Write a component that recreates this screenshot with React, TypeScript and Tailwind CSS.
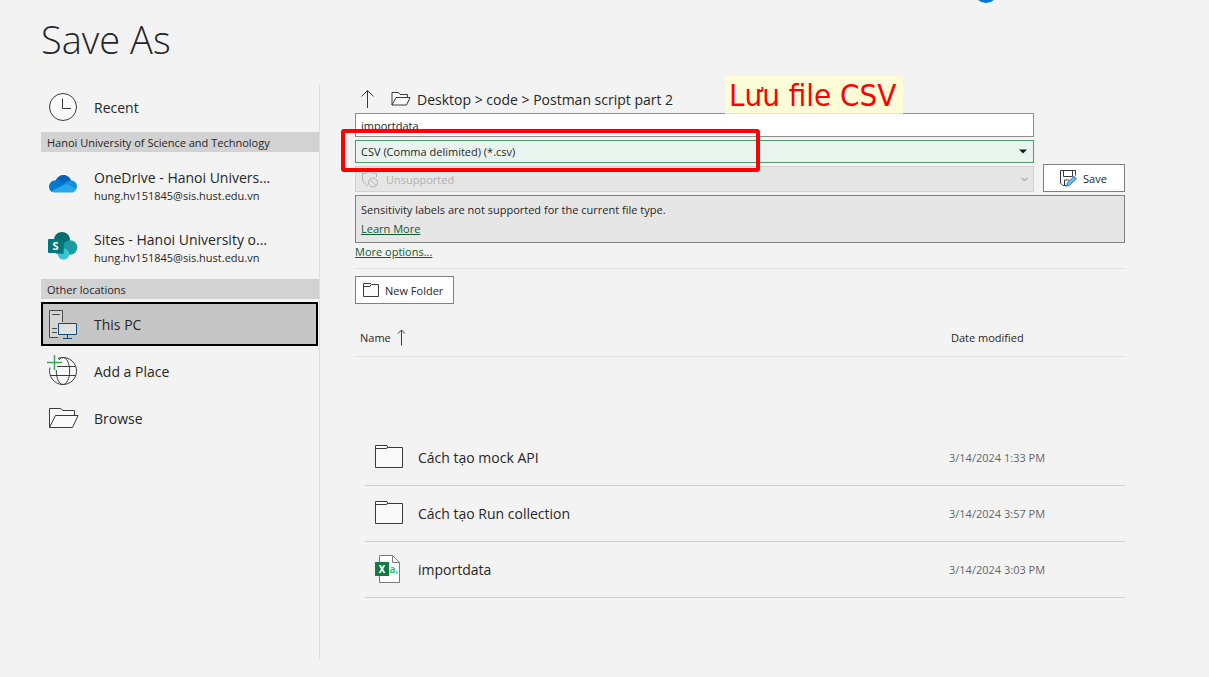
import type { ReactNode } from 'react';

function ClockIcon() {
  return (
    <svg width="32" height="32" viewBox="0 0 32 32" fill="none" stroke="#3a3a3a">
      <circle cx="16" cy="16" r="13.5" fill="#fafafa" />
      <path d="M15.5 7.5V17.5H24" />
    </svg>
  );
}

function OneDriveIcon() {
  return (
    <svg width="32" height="32" viewBox="0 0 32 32">
      <path d="M8.6 12.6C10.2 9 13 7 16.3 7c4 0 7 2.500 8 6L17 18z" fill="#0364b8" />
      <path d="M8.600 12.300c2.200-.3 4 .2 5.700 1.300l6.700 4L5 24c-1.900-1.200-3-3-3-5.200 0-3.500 2.800-6.300 6.600-6.500z" fill="#0078d4" />
      <path d="M24 12.600c3.600 0 6 2.600 6 5.800 0 1.300-.4 2.400-1 3.300L17 15.300l3-1.700c1.200-.7 2.500-1 4-1z" fill="#1490df" />
      <path d="M4.300 23.300L18.300 16l10.900 5.400c-1 1.900-2.800 3.100-5 3.100H8.500c-1.600 0-3.100-.4-4.200-1.200z" fill="#28a8ea" />
    </svg>
  );
}

function SharePointIcon() {
  return (
    <svg width="32" height="32" viewBox="0 0 32 32">
      <circle cx="15" cy="10" r="8" fill="#036c70" />
      <circle cx="23" cy="17.500" r="7.300" fill="#1a9ba1" />
      <circle cx="16.500" cy="24" r="5.800" fill="#37c6d0" />
      <path d="M16 9h1v15h-8l-.5-1H16z" fill="#025558" opacity=".5" />
      <rect x="1" y="9" width="15" height="14" rx="1" fill="#03787c" />
      <text x="8.500" y="20" textAnchor="middle" fontSize="11" fontWeight="700" fill="#fff">
        S
      </text>
    </svg>
  );
}

function ThisPcIcon() {
  return (
    <svg width="32" height="32" viewBox="0 0 32 32" fill="none">
      <path d="M11 29.500H2.500v-27h13V14" fill="#d6d6d6" stroke="#4a4a4a" />
      <path d="M5 6.500h8M5 20.500h5M5 24.500h5" stroke="#4a4a4a" />
      <path d="M11.500 15.500h18v11h-18zM20.500 26.500v4M16 30.500h9" fill="#e0e0e0" stroke="#0f4c81" />
    </svg>
  );
}

function AddPlaceIcon() {
  return (
    <svg width="32" height="32" viewBox="0 0 32 32" fill="none" stroke="#3a3a3a">
      <path d="M12 3.100A13.500 13.500 0 1 1 3.100 12L8 11z" fill="#fafafa" stroke="none" />
      <path d="M11 3.500A13.500 13.500 0 1 1 3 12.500" />
      <path d="M12 5c1-1.600 2.400-2.500 4-2.500 3.700 0 6.700 6 6.700 13.500s-3 13.500-6.700 13.500S9.300 23.500 9.300 16v-1M10 11.500h18.500M3.500 20.500h25" />
      <path d="M7.500 0v15M0 7.500h15" stroke="#3fa75a" strokeWidth="1.5" />
    </svg>
  );
}

function OpenFolderIcon({ className }: { className: string }) {
  return (
    <svg className={className} viewBox="0 0 32 22" fill="none" stroke="#3a3a3a">
      <path d="M2.500 20.500V1.500h11l2.500 2h11.500v5" fill="#fafafa" />
      <path d="M2.500 20.500L8.500 8.500H31l-5.500 12z" fill="#fafafa" strokeLinejoin="round" />
    </svg>
  );
}

function SmallOpenFolderIcon() {
  return (
    <svg width="20" height="14" viewBox="0 0 20 14" fill="none" stroke="#3a3a3a">
      <path d="M1 13V.5h6.500L9 2.500h7.500v3M1 13L5 5.500h14L15.500 13z" fill="#fafafa" strokeLinejoin="round" />
    </svg>
  );
}

function FolderIcon() {
  return (
    <svg width="28" height="28" viewBox="0 0 28 28" fill="none" stroke="#3a3a3a">
      <path d="M.5 24.500v-22H12l1 2h14.500v20z" fill="#fafafa" />
      <path d="M.5 5.500H11l2-1" />
    </svg>
  );
}

function CsvIcon() {
  return (
    <svg width="28" height="28" viewBox="0 0 28 28">
      <path d="M4.500.5h13l7 7v20h-20z" fill="#fff" stroke="#7a7a7a" />
      <path d="M17.500.5v7h7" fill="none" stroke="#7a7a7a" />
      <rect y="7" width="14" height="14" fill="#107c41" />
      <path d="M3.800 10h2.100L7.100 12.500 8.400 10h2l-2.300 4 2.300 4H8.300L7 15.400 5.700 18h-2L6 14z" fill="#fff" />
      <text x="14.500" y="18" fontSize="10" fontWeight="700" fill="#33c481">
        a,
      </text>
    </svg>
  );
}

function Place({ icon, label, detail, selected }: { icon: ReactNode; label: string; detail?: string; selected?: boolean }) {
  const size = detail
    ? 'h-[62px] pt-0.5 pl-1.5'
    : selected
      ? 'my-[3px] mr-px h-11 border-2 border-black bg-[#c6c6c6] pl-1'
      : 'h-[47px] pb-1 pl-1.5';
  return (
    <button type="button" className={`flex items-center gap-[15px] text-left ${size}`}>
      {icon}
      <span className={detail ? 'flex flex-col pt-1' : 'flex flex-col pt-0.5'}>
        <span className="text-sm leading-5">{label}</span>
        {detail && <span className="text-[11px] leading-4">{detail}</span>}
      </span>
    </button>
  );
}

const files = [
  { name: 'Cách tạo mock API', date: '3/14/2024 1:33 PM', icon: <FolderIcon /> },
  { name: 'Cách tạo Run collection', date: '3/14/2024 3:57 PM', icon: <FolderIcon /> },
  { name: 'importdata', date: '3/14/2024 3:03 PM', icon: <CsvIcon /> },
];

export default function App() {
  return (
    <div className="relative flex min-h-screen flex-col overflow-hidden bg-[#f3f3f3] pb-[18px] pl-[41px] font-['Open_Sans',sans-serif] text-[11px] text-[#262626]">
      <div className="absolute -top-[21px] right-[211px] size-6 rounded-full bg-[#0078d7]" />
      <header className="h-[85px] pt-3">
        <h1 className="text-[38px] leading-[54px] font-light">Save As</h1>
      </header>

      <div className="flex flex-1">
        <nav className="flex w-[279px] shrink-0 flex-col border-r border-[#dedede]">
          <Place icon={<ClockIcon />} label="Recent" />
          <h2 className="h-5 bg-[#d2d2d2] pl-1.5 leading-[22px] font-medium">Hanoi University of Science and Technology</h2>
          <Place icon={<OneDriveIcon />} label="OneDrive - Hanoi Univers..." detail="hung.hv151845@sis.hust.edu.vn" />
          <Place icon={<SharePointIcon />} label="Sites - Hanoi University o..." detail="hung.hv151845@sis.hust.edu.vn" />
          <h2 className="mt-[3px] h-5 bg-[#d2d2d2] pl-1.5 leading-[22px] font-medium">Other locations</h2>
          <Place icon={<ThisPcIcon />} label="This PC" selected />
          <Place icon={<AddPlaceIcon />} label="Add a Place" />
          <Place icon={<OpenFolderIcon className="h-[22px] w-8" />} label="Browse" />
        </nav>

        <main className="relative mr-[84px] ml-[35px] flex-1">
          <div className="flex h-7 items-center pl-1.5">
            <button type="button" aria-label="Up one level">
              <svg width="14" height="20" viewBox="0 0 14 20" fill="none" stroke="#3a3a3a">
                <path d="M6.500 19V1.500M.5 7.500l6-6 6 6" />
              </svg>
            </button>
            <div className="ml-4 flex items-center gap-1.5">
              <SmallOpenFolderIcon />
              <span className="pt-0.5 text-sm leading-5">Desktop &gt; code &gt; Postman script part 2</span>
            </div>
          </div>

          <div className="flex items-end gap-[9px]">
            <div className="flex flex-1 flex-col gap-[3px]">
              <input aria-label="File name" defaultValue="importdata" className="h-6 border border-[#8f8f8f] bg-white px-[5px] outline-none" />
              <div className="relative flex">
                <select aria-label="File type" className="h-[23px] flex-1 appearance-none border border-[#4f9a6e] bg-[#eaf4ee] px-[5px] pt-0.5 outline-none">
                  <option>CSV (Comma delimited) (*.csv)</option>
                </select>
                <svg className="pointer-events-none absolute top-[9px] right-[7px]" width="8" height="5" viewBox="0 0 8 5">
                  <path d="M0 .5h8L4 4.500z" fill="#1a1a1a" />
                </svg>
              </div>
              <div className="relative flex">
                <select aria-label="Sensitivity" disabled className="h-[26px] flex-1 appearance-none border border-[#d2d2d2] bg-[#e6e6e6] pt-0.5 pl-[30px] text-[#b1b1b1] opacity-100">
                  <option>Unsupported</option>
                </select>
                <svg className="pointer-events-none absolute top-[5px] left-[7px]" width="17" height="17" viewBox="0 0 17 17" fill="none" stroke="#b1b1b1">
                  <path d="M14.500 6V2.500C12 2.500 10 2 7.500.5 5.500 2 3.500 2.500.5 2.500V7c0 3.500 2 6 5.500 8" />
                  <circle cx="11" cy="11.500" r="4.500" />
                  <path d="M8 8.500l6 6" />
                </svg>
                <svg className="pointer-events-none absolute top-[11px] right-1.5" width="7" height="5" viewBox="0 0 7 5" fill="none" stroke="#b1b1b1" strokeWidth="1.5">
                  <path d="M.5 1l3 2.500 3-2.500" />
                </svg>
              </div>
            </div>
            <button type="button" className="flex h-7 w-[82px] items-center gap-1.5 border border-[#808080] bg-white pl-4">
              <svg width="17" height="17" viewBox="0 0 17 17" fill="none" stroke="#3a3a3a">
                <path d="M6 15.500H3L.5 13V.5h15v5M3.500.5v6h9v-6M4.500 15v-5H9" />
                <path d="M6.500 16l1-3L14 6.500l2 2-6.500 6.500z" fill="#8ec8f0" stroke="#2b90d9" strokeWidth="1.2" />
              </svg>
              <span className="pt-0.5">Save</span>
            </button>
          </div>

          <section className="mt-[3px] h-12 border border-[#808080] bg-[#e6e6e6] px-[5px] pt-1">
            <p className="leading-[19px]">Sensitivity labels are not supported for the current file type.</p>
            <a href="#learn" className="leading-[19px] text-[#0e5c2f] underline">Learn More</a>
          </section>
          <div className="h-[26px] border-b border-[#dedede]">
            <a href="#options" className="leading-[18px] text-[#0e5c2f] underline">More options...</a>
          </div>

          <button type="button" className="mt-[7px] flex h-7 w-[99px] items-center gap-1.5 border border-[#808080] bg-white pl-[7px]">
            <svg width="16" height="14" viewBox="0 0 16 14" fill="none" stroke="#3a3a3a">
              <path d="M.5 13.500V.5h7l1 1h7v12zM.5 3.500H7l1-2" fill="#fafafa" />
            </svg>
            <span className="pt-0.5">New Folder</span>
          </button>

          <table className="mt-4 w-full table-fixed border-collapse text-left">
            <colgroup>
              <col className="w-2.5" />
              <col />
              <col className="w-[176px]" />
            </colgroup>
            <thead>
              <tr className="h-9 border-b border-[#dedede]">
                <th colSpan={2} className="pl-[5px] font-normal">
                  <span className="flex items-center gap-1.5">
                    Name
                    <svg width="9" height="17" viewBox="0 0 9 17" fill="none" stroke="#3a3a3a">
                      <path d="M4.500 16.500V1.500M1 4.500l3.500-3.500L8 4.500" />
                    </svg>
                  </span>
                </th>
                <th className="pl-0.5 font-normal">Date modified</th>
              </tr>
            </thead>
            <tbody>
              <tr aria-hidden="true" className="h-[73px]">
                <td colSpan={3} />
              </tr>
              {files.map((file) => (
                <tr key={file.name} className="h-14">
                  <td />
                  <td className="border-b border-[#d0d0d0] pl-2.5">
                    <span className="flex items-center gap-[15px] text-sm">
                      {file.icon}
                      <span className="pt-0.5">{file.name}</span>
                    </span>
                  </td>
                  <td className="border-b border-[#d0d0d0] pt-0.5 text-[#666666]">{file.date}</td>
                </tr>
              ))}
            </tbody>
          </table>

          <div className="pointer-events-none absolute top-11 -left-3.5 h-[43px] w-[419px] rounded-[3px] border-4 border-[#ff0000]" />
          <div className="absolute -top-[9px] left-[370px] h-[38px] w-[178px] bg-[#ffffcc]/75 pl-1 font-['DejaVu_Sans_Condensed','DejaVu_Sans',sans-serif] text-[31px] leading-[38px] whitespace-nowrap text-[#ff0000]">
            Lưu file CSV
          </div>
        </main>
      </div>
    </div>
  );
}
